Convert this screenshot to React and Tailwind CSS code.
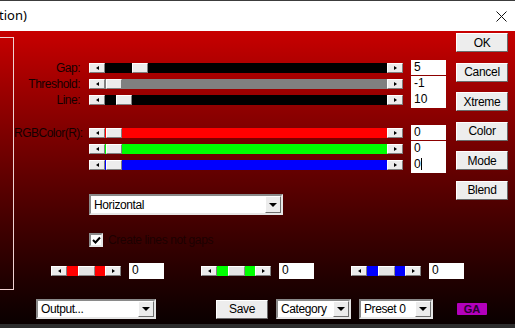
const ui = "font-['Liberation_Sans',Arial,sans-serif]";

function ArrowBtn({ dir }) {
  return (
    <div className="w-[16px] h-full shrink-0 bg-[#ececec] border border-t-white border-l-white border-r-[#808080] border-b-[#808080] flex items-center justify-center">
      {dir === 'l' ? (
        <div className="w-0 h-0 border-y-[2px] border-y-transparent border-r-[3px] border-r-black" />
      ) : (
        <div className="w-0 h-0 border-y-[2px] border-y-transparent border-l-[3px] border-l-black" />
      )}
    </div>
  );
}

function Thumb({ wide }) {
  return (
    <div
      className={
        wide
          ? 'w-[17px] h-full shrink-0 bg-[#e4e4e4] border border-t-white border-l-white border-r-[#8a8a8a] border-b-[#8a8a8a]'
          : 'w-[16px] h-full shrink-0 bg-[#ececec] border border-t-white border-l-white border-r-[#808080] border-b-[#808080]'
      }
    />
  );
}

function Slider({ track, pad }) {
  return (
    <div className="flex h-[10px] w-[314px] ml-[9px]">
      <ArrowBtn dir="l" />
      <div className={`flex flex-1 ${track} ${pad}`}>
        <Thumb />
      </div>
      <ArrowBtn dir="r" />
    </div>
  );
}

function ValueBox({ value, divider, caret, className = '' }) {
  return (
    <div
      className={`w-[35px] h-[16px] shrink-0 bg-white pl-[3px] text-[12px] leading-[14px] text-black flex items-start ${
        divider ? 'border-b border-[#8c0000]' : ''
      } ${className}`}
    >
      <span>{value}</span>
      {caret && <span className="w-[1px] h-[12px] mt-[1px] bg-black" />}
    </div>
  );
}

function SliderRow({ label, track, pad, value, divider, caret }) {
  return (
    <div className="flex items-center h-[16px]">
      <div className="w-[66px] text-right text-[12px] leading-none tracking-[-0.5px] text-[#140000]">
        {label}
      </div>
      <Slider track={track} pad={pad} />
      <ValueBox value={value} divider={divider} caret={caret} className="ml-[8px]" />
    </div>
  );
}

function MiniSlider({ track }) {
  return (
    <div className="flex h-[10px] w-[70px] shrink-0">
      <ArrowBtn dir="l" />
      <div className={`flex flex-1 pl-[11px] ${track}`}>
        <Thumb wide />
      </div>
      <ArrowBtn dir="r" />
    </div>
  );
}

function Combo({ text, className = '' }) {
  return (
    <div
      className={`flex items-stretch bg-white border-2 border-t-[#8a8a8a] border-l-[#8a8a8a] border-r-[#e6e6e6] border-b-[#e6e6e6] ${className}`}
    >
      <div className="flex-1 flex items-center pl-[3px] text-[12px] leading-none tracking-[-0.4px] text-black">
        {text}
      </div>
      <div className="w-[16px] bg-[#ececec] border border-t-white border-l-white border-r-[#6e6e6e] border-b-[#6e6e6e] flex items-center justify-center">
        <div className="w-0 h-0 border-x-[4px] border-x-transparent border-t-[4px] border-t-black" />
      </div>
    </div>
  );
}

function Button({ children, className = '' }) {
  return (
    <button
      className={`h-[19px] shrink-0 bg-[#ededed] border border-t-white border-l-white border-r-[#6a6a6a] border-b-[#6a6a6a] text-[12px] leading-none tracking-[-0.3px] text-black flex items-center justify-center ${className}`}
    >
      {children}
    </button>
  );
}

export default function App() {
  return (
    <div className={`w-[515px] h-[328px] overflow-hidden flex flex-col ${ui}`}>
      {/* title bar */}
      <div className="h-[31px] shrink-0 bg-white border-t border-[#3c3c3c] flex items-center justify-between pr-[8px]">
        <span className="-ml-[1px] text-[13px] font-['Noto_Sans',sans-serif] text-black">tion)</span>
        <svg width="11" height="11" viewBox="0 0 11 11">
          <path d="M0.5 0.5 L10.5 10.5 M10.5 0.5 L0.5 10.5" stroke="#111" strokeWidth="1" />
        </svg>
      </div>

      {/* body */}
      <div className="flex-1 flex flex-col bg-linear-to-b from-[#c80000] to-[#0a0000]">
        <div className="flex">
          <div className="w-[14px] h-[253px] mt-[6px] shrink-0 border-y border-r border-[#f0d2d2]" />

          <div className="flex flex-col">
            <div className="flex">
              <div className="flex flex-col w-[432px] pt-[29px]">
                <SliderRow label="Gap:" track="bg-black" pad="pl-[27px]" value="5" divider />
                <SliderRow label="Threshold:" track="bg-[#808080]" pad="pl-[1px]" value="-1" />
                <SliderRow label="Line:" track="bg-black" pad="pl-[11px]" value="10" />

                <div className="mt-[17px]">
                  <SliderRow label="RGBColor(R):" track="bg-[#ff0000]" pad="pl-[1px]" value="0" divider />
                  <SliderRow label="" track="bg-[#00ff00]" pad="pl-[1px]" value="0" />
                  <SliderRow label="" track="bg-[#0000ff]" pad="pl-[1px]" value="0" caret />
                </div>

                <Combo text="Horizontal" className="mt-[21px] ml-[75px] w-[194px] h-[21px]" />

                <div className="mt-[18px] ml-[75px] flex items-center gap-[5px] h-[14px]">
                  <div className="w-[14px] h-[14px] bg-white border-2 border-t-[#8a8a8a] border-l-[#8a8a8a] border-r-[#e6e6e6] border-b-[#e6e6e6] flex items-center justify-center">
                    <svg width="9" height="8" viewBox="0 0 9 8">
                      <path d="M1 4 L3.5 6.5 L8 1.5" stroke="#000" strokeWidth="2" fill="none" />
                    </svg>
                  </div>
                  <span className="text-[12px] leading-none tracking-[-0.4px] text-[#1c0000]">
                    Create lines not gaps
                  </span>
                </div>
              </div>

              <div className="flex flex-col ml-[10px] w-[52px] pt-[2px] gap-[10.5px]">
                <Button className="w-[52px]">OK</Button>
                <Button className="w-[52px]">Cancel</Button>
                <Button className="w-[52px]">Xtreme</Button>
                <Button className="w-[52px]">Color</Button>
                <Button className="w-[52px]">Mode</Button>
                <Button className="w-[52px]">Blend</Button>
              </div>
            </div>

            <div className="flex items-center h-[16px] mt-[16px] pl-[37px]">
              <MiniSlider track="bg-[#ff0000]" />
              <ValueBox value="0" className="ml-[8px]" />
              <div className="ml-[37px]">
                <MiniSlider track="bg-[#00ff00]" />
              </div>
              <ValueBox value="0" className="ml-[8px]" />
              <div className="ml-[37px]">
                <MiniSlider track="bg-[#0000ff]" />
              </div>
              <ValueBox value="0" className="ml-[8px]" />
            </div>
          </div>
        </div>

        <div className="flex items-center h-[20px] mt-[9px] pl-[36px]">
          <Combo text="Output..." className="w-[120px] h-[20px]" />
          <Button className="ml-[60px] w-[52px]">Save</Button>
          <Combo text="Category" className="ml-[8px] w-[75px] h-[20px]" />
          <Combo text="Preset 0" className="ml-[8px] w-[74px] h-[20px]" />
          <svg className="ml-[24px]" width="30" height="12" viewBox="0 0 30 12">
            <rect x="0" y="0" width="30" height="12" rx="1" fill="#b400bc" />
            <text x="15" y="10" textAnchor="middle" fontSize="11" fontWeight="bold" fill="#2a0030" fontFamily="Liberation Sans, sans-serif">
              GA
            </text>
          </svg>
        </div>
      </div>

      <div className="h-[4px] shrink-0 bg-[#2d2d2d]" />
    </div>
  );
}
